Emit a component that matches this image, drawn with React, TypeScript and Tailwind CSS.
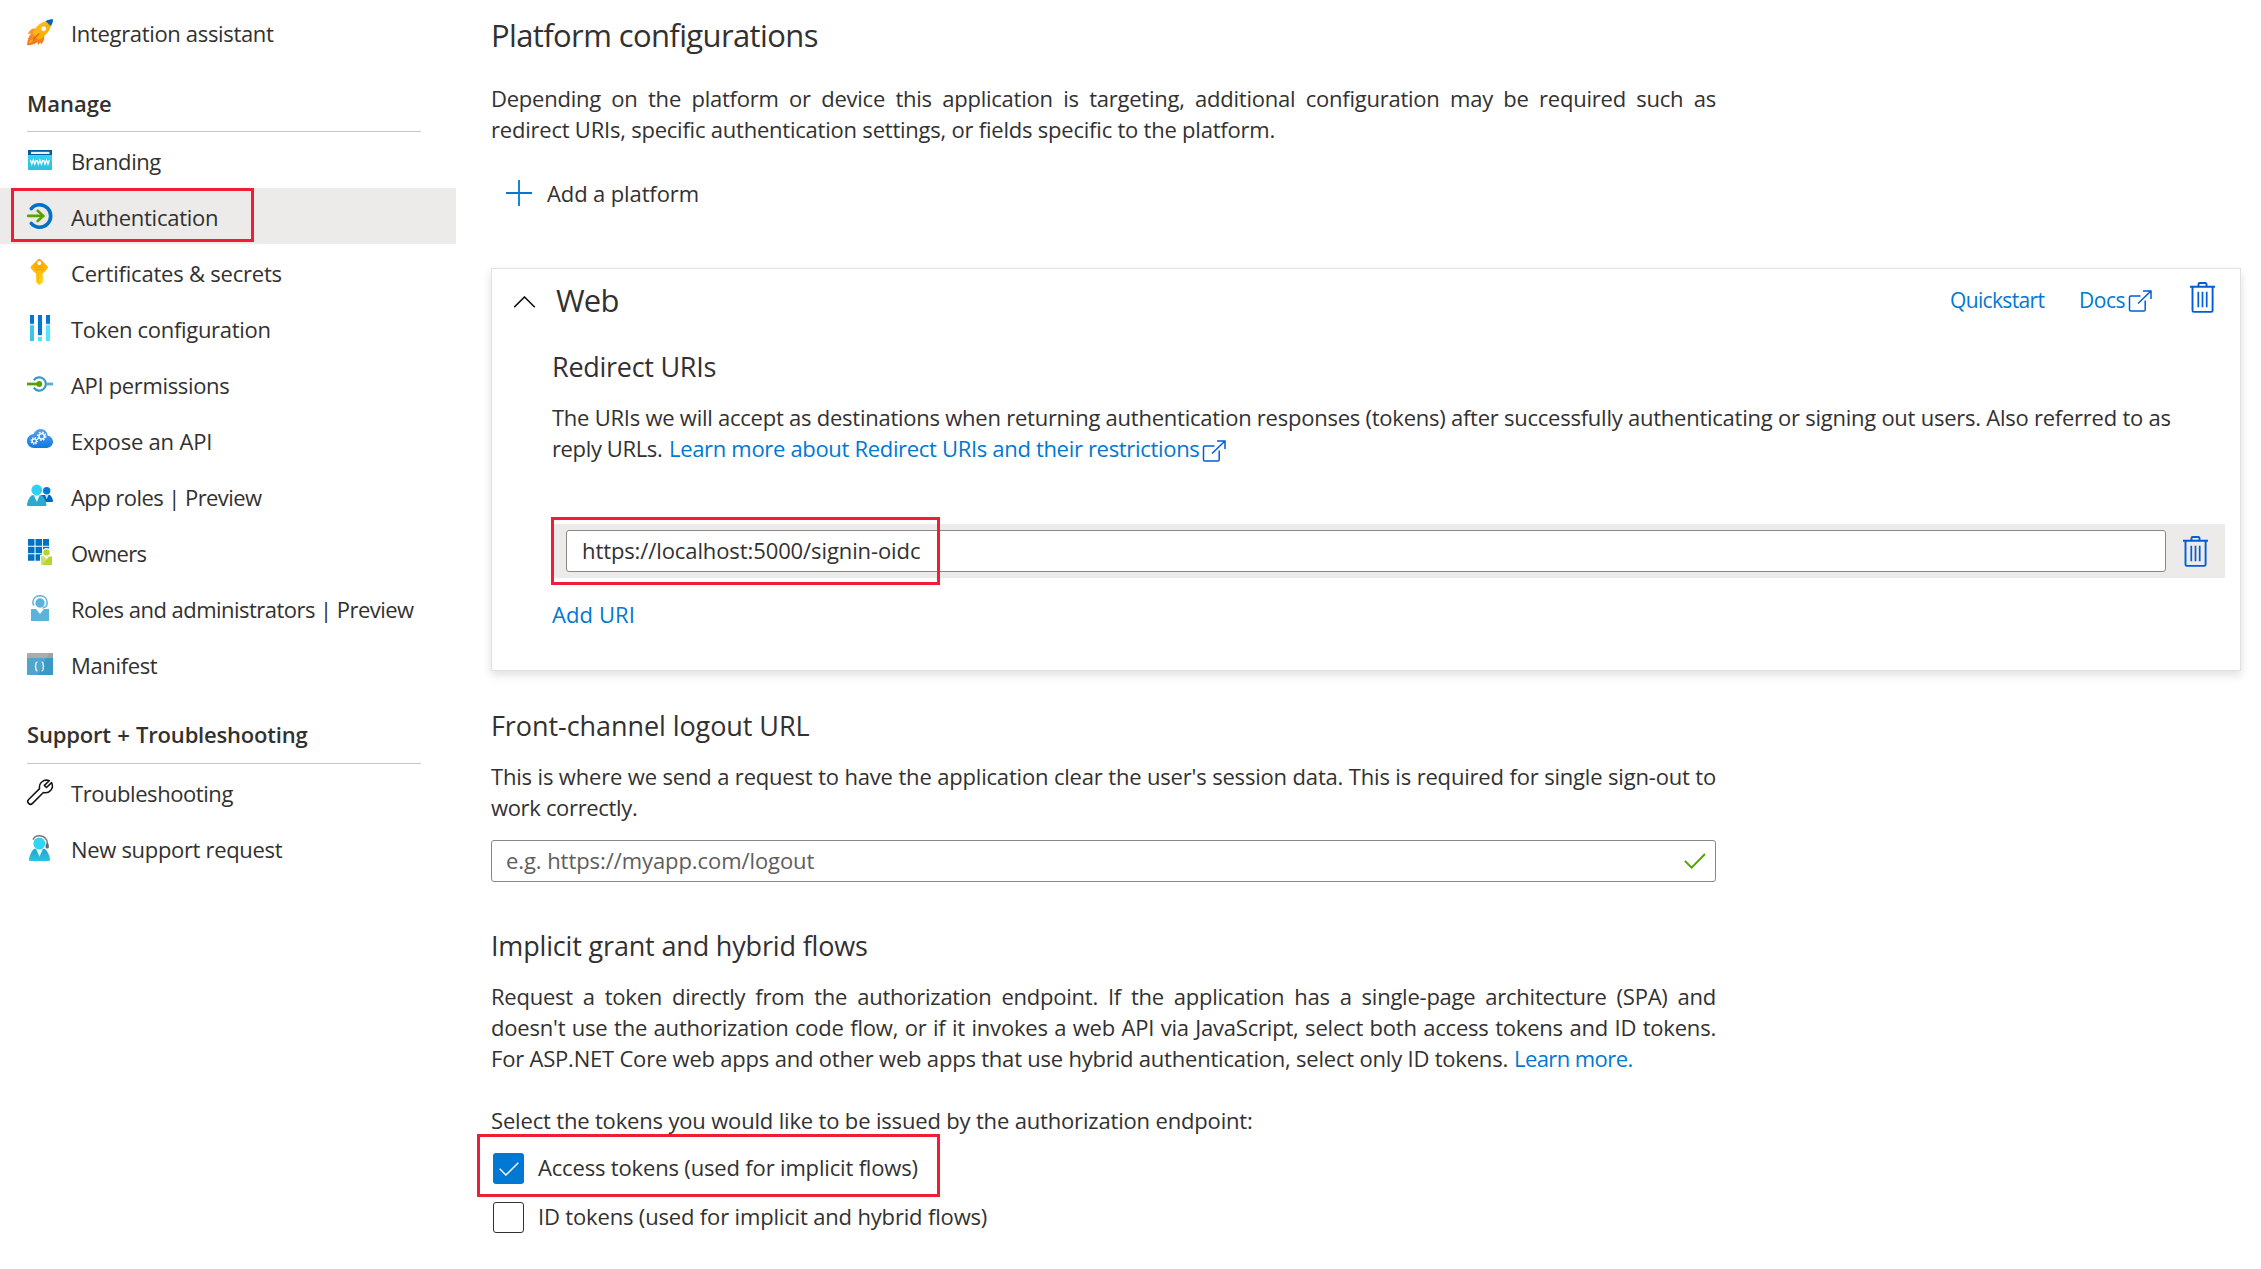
import type { ReactNode } from "react";

function Icon({ children }: { children: ReactNode }) {
  return (
    <svg viewBox="0 0 26 26" className="h-[26px] w-[26px] shrink-0 overflow-visible">
      {children}
    </svg>
  );
}

const RocketIcon = () => (
  <Icon>
    <defs>
      <linearGradient id="rocketFin" x1="0" y1="0" x2="0" y2="1">
        <stop offset="0" stopColor="#ff9a2e" />
        <stop offset="1" stopColor="#f27514" />
      </linearGradient>
    </defs>
    <path d="M8.5 9.5C5 9 2.3 10.8 1 15l3.2-.6C1.6 17 .2 21 .1 26.3c4.6-.2 7.9-1 10.4-3.2l.7 2.9 2-2.4 1.2 1.6c2.6-3.2 3.4-5.7 2.6-9.2z" fill="url(#rocketFin)" />
    <path d="M18.5 2.2C12.4 4 8.2 8 5.6 14.6l5.9 5.9C18.3 17 22 12.4 23.8 6.9z" fill="#fdb913" />
    <path d="M21.2 4.6 8.5 17.5l3 3C18.3 17 22 12.4 23.8 6.9z" fill="#f5b400" />
    <path d="M26 .2c-3 0-5.300.6-7.500 2L23.800 7C25.300 5 26 3 26 .2z" fill="#0a62b8" />
    <circle cx="16.700" cy="9.700" r="2.700" fill="#fff" stroke="#f7a11b" strokeWidth=".6" />
    <path d="M5.500 21.500 12 14.600" stroke="#e0641b" strokeWidth="1.500" />
    <path d="m2.300 23.700 3.400-3.200" stroke="#ffb52e" strokeWidth="1.600" />
  </Icon>
);

const BrandingIcon = () => (
  <Icon>
    <defs>
      <linearGradient id="brandBody" x1="0" y1="0" x2="0" y2="1">
        <stop offset="0" stopColor="#32d4f5" />
        <stop offset="1" stopColor="#2fc0dc" />
      </linearGradient>
    </defs>
    <path d="M1 3h24v5H1z" fill="#005ba1" />
    <path d="M1 8h24v14.200a.8.8 0 0 1-.8.8H1.800a.8.8 0 0 1-.8-.8z" fill="url(#brandBody)" />
    <path d="M4 4.800h18.500v2.200H4z" fill="#e8f1f8" />
    <path d="m3.400 13 1.400 4 1.500-4 1.500 4 1.400-4M10 13l1.400 4 1.500-4 1.500 4 1.400-4M16.600 13l1.400 4 1.500-4 1.500 4 1.400-4" fill="none" stroke="#fff" strokeWidth="1.300" />
  </Icon>
);

const AuthIcon = () => (
  <Icon>
    <path d="M4.300 5.600C6.500 3 9.300 1.800 12.500 1.800a11.200 11.200 0 0 1 0 22.400c-3.200 0-6-1.200-8.200-3.800" fill="none" stroke="#0072c6" strokeWidth="3.600" strokeLinecap="round" />
    <path d="M1.200 12.900h14" stroke="#57a300" strokeWidth="2.700" strokeLinecap="round" />
    <path d="m10.700 7.800 5.500 5.100-5.500 5.100" fill="none" stroke="#57a300" strokeWidth="2.700" strokeLinecap="round" />
  </Icon>
);

const KeyIcon = () => (
  <Icon>
    <defs>
      <linearGradient id="keyFill" x1="0" y1="0" x2="0" y2="1">
        <stop offset="0" stopColor="#fea500" />
        <stop offset="1" stopColor="#ffd91a" />
      </linearGradient>
    </defs>
    <path d="M10.800.6a2.100 2.100 0 0 1 3 0l6.500 6.400a2.100 2.100 0 0 1 0 2.900l-4.800 5v1.500l1 1-1 1.300 1 1.300-1 1.300 1 1.400-4.200 3.600-3.200-3V14.900l-4.800-5a2.100 2.100 0 0 1 0-2.900z" fill="url(#keyFill)" />
    <circle cx="12.300" cy="4.100" r="2" fill="#fff" />
    <path d="M8 8.400h8.600M8 10.600h8.600" stroke="#f59b00" strokeWidth=".9" />
    <path d="M11.200 14.500v9.300" stroke="#f5a800" strokeWidth=".9" />
  </Icon>
);

const TokenIcon = () => (
  <Icon>
    <path d="M3 0h4v9H3zM11 0h4v20h-4zM19 0h4v9h-4z" fill="#0078d4" />
    <path d="M3 10.300h4V26H3z" fill="#3cc5e4" />
    <path d="M19 10.300h4V26h-4zM11 22h4v4h-4z" fill="#50e6ff" />
    <path d="M2.500 9.200h5M18.500 9.200h5M10.500 20.800h5" stroke="#d2d0ce" strokeWidth="1" />
  </Icon>
);

const ApiIcon = () => (
  <Icon>
    <path d="M6.800 9.300a6.600 6.600 0 1 1 0 7.400" fill="none" stroke="#3999c6" strokeWidth="2.200" />
    <path d="M19 13h7" stroke="#5aa9d0" strokeWidth="2.800" />
    <path d="M0 13h12" stroke="#57a300" strokeWidth="2.800" />
    <circle cx="12.300" cy="13" r="2.900" fill="#57a300" />
  </Icon>
);

const CloudIcon = () => (
  <Icon>
    <defs>
      <linearGradient id="cloudFill" x1="0" y1="0" x2="0" y2="1">
        <stop offset="0" stopColor="#5ea0ef" />
        <stop offset="1" stopColor="#0f7ade" />
      </linearGradient>
    </defs>
    <path d="M26 14.800c0-3.200-2.300-5.700-5.300-6C20.400 4.800 17.500 2 13.600 2 10.400 2 7.600 4 6.600 7.100 2.800 7.500 0 10.400 0 14c0 4 3.100 7 7 7h12.800c3.600-.2 6.200-2.900 6.200-6.200z" fill="url(#cloudFill)" />
    <g fill="none" stroke="#fff">
      <circle cx="14.700" cy="9.300" r="2.700" strokeWidth="1.400" />
      <circle cx="14.700" cy="9.300" r="4" strokeWidth="1.500" strokeDasharray="1.570 1.570" />
      <circle cx="7.300" cy="13.900" r="2.100" strokeWidth="1.200" />
      <circle cx="7.300" cy="13.900" r="3.200" strokeWidth="1.300" strokeDasharray="1.260 1.250" />
    </g>
  </Icon>
);

const PeopleIcon = () => (
  <Icon>
    <circle cx="19.700" cy="7.700" r="3.700" fill="#0078d4" />
    <path d="M14 12h9c1.600 1.200 2.800 4 3 6.200 0 .5-.3.800-.8.800H17z" fill="#0069be" />
    <path d="m18 12 1.700 4.200 1.700-4.200z" fill="#cfe6f8" />
    <path d="M19.500 21.800c0 .9-.6 1.300-1.300 1.300H1.300C.5 23.100 0 22.700 0 21.800c.4-4.200 2.800-8.300 5-9.500h9.500c2.200 1.200 4.600 5.300 5 9.500z" fill="#2ba9ce" />
    <path d="m6.800 12.200 3 6.700 3-6.700z" fill="#e4f6fb" />
    <circle cx="9.800" cy="7" r="5.400" fill="#32d0f0" />
  </Icon>
);

const OwnersIcon = () => (
  <Icon>
    <path d="M1 0h6.500v6.700H1zM8.500 0H15v6.700H8.500zM16 0h6v6.700h-6zM1 7.700h6.500v6.500H1zM8.500 7.700H15v6.500H8.500zM16 7.700h6v6.500h-6zM1 15.200h6.500v6.500H1zM8.500 15.200H15v6.500H8.500z" fill="#0072c6" />
    <circle cx="19.500" cy="13.300" r="4.200" fill="#fff" />
    <path d="M13 16h12.500v10.500H13z" fill="#fff" />
    <circle cx="19.500" cy="13.400" r="3.200" fill="#b8d432" />
    <path d="M14 17.500h3l2.500 3.300 2.500-3.300h3V26H14z" fill="#b8d432" />
    <path d="M14 17.500h3l2.500 3.300L15.500 26H14z" fill="#cde06a" />
  </Icon>
);

const AdminIcon = () => (
  <Icon>
    <circle cx="13" cy="8" r="4.700" fill="#59b4d9" />
    <path d="M7 10.500A7 7 0 0 1 5.800 7.600C5.900 3.400 9 .7 13 .7s7.100 2.700 7.200 6.900c0 3-1.700 5-4.700 5.400" fill="none" stroke="#59b4d9" strokeWidth="1.500" />
    <path d="M4 14h5l4 5 4-5h5v12H4z" fill="#59b4d9" />
  </Icon>
);

const ManifestIcon = () => (
  <Icon>
    <path d="M0 2h26v5H0z" fill="#a0a1a2" />
    <path d="M0 7h26v16.500a.5.5 0 0 1-.5.5H.5a.5.5 0 0 1-.5-.5z" fill="#3999c6" />
    <path d="M0 2h22L11 24H0z" fill="#fff" opacity=".12" />
    <path d="M10.500 11c-1.500 0-1.600.7-1.600 1.700v1.100c0 .9-.3 1.400-1.100 1.400.8 0 1.100.5 1.100 1.400v1.700c0 1 .2 1.700 1.600 1.700M14.500 11c1.500 0 1.600.7 1.600 1.700v1.100c0 .9.300 1.400 1.100 1.400-.8 0-1.100.5-1.100 1.400v1.700c0 1-.2 1.700-1.600 1.700" fill="none" stroke="#fff" strokeWidth="1.200" />
  </Icon>
);

const WrenchIcon = () => (
  <Icon>
    <path d="M22.300 1.800A7 7 0 0 0 12.600 9.600L1.600 20.500a2.700 2.700 0 0 0 3.900 3.900L16.400 13.500a7 7 0 0 0 8.200-9.900L19.500 8.500l-2.200-2.100z" fill="#fff" stroke="#111" strokeWidth="1.500" strokeLinejoin="round" />
  </Icon>
);

const SupportIcon = () => (
  <Icon>
    <defs>
      <linearGradient id="supportBody" x1="0" y1="0" x2="0" y2="1">
        <stop offset="0" stopColor="#22a5cb" />
        <stop offset="1" stopColor="#28c3e4" />
      </linearGradient>
    </defs>
    <path d="M6 4.600C7.300 1.800 9.500.7 12.300.7c4.700 0 8 3.300 8 7.500v3.600" fill="none" stroke="#7a7a7a" strokeWidth="1.500" />
    <rect x="18.600" y="8.600" width="3.200" height="5" rx="1.400" fill="#6b6b6b" />
    <path d="M23 24.800c0 .7-.5 1.200-1.200 1.200H3.200C2.500 26 2 25.500 2 24.800c.4-4.800 2.800-9.200 5.500-11h10c2.700 1.800 5.100 6.200 5.500 11z" fill="url(#supportBody)" />
    <path d="m9 13.800 3.500 7.900 3.500-7.900z" fill="#e6f8fc" />
    <circle cx="12.300" cy="8.500" r="5.900" fill="#32d4f5" />
  </Icon>
);

const ExternalIcon = () => (
  <svg viewBox="0 0 24 22" className="h-[22px] w-[24px] shrink-0" fill="none" stroke="#015cda" strokeWidth="1.500">
    <path d="M12.500 6H2.800A1.300 1.300 0 0 0 1.500 7.300v12.400A1.300 1.300 0 0 0 2.800 21h13.100a1.300 1.300 0 0 0 1.300-1.300V10.500" />
    <path d="M15 1h8v8M23 1 10 13.500" />
  </svg>
);

const TrashIcon = () => (
  <svg viewBox="0 0 26 31" className="h-[31px] w-[26px] shrink-0" fill="none" stroke="#015cda" strokeWidth="1.900">
    <path d="M0 4.700h25M8.500 4.500V2.200A1.200 1.200 0 0 1 9.700 1h5.600a1.200 1.200 0 0 1 1.200 1.200v2.300" />
    <path d="M2.500 5v23.500a1.400 1.400 0 0 0 1.400 1.400h17.300a1.400 1.400 0 0 0 1.400-1.400V5" />
    <path d="M8.300 9.700v15.600M12.500 9.700v15.600M16.700 9.700v15.600" strokeWidth="1.700" />
  </svg>
);

/** Red annotation frame laid over a highlighted control. */
const Frame = ({ className }: { className: string }) => (
  <span className={`pointer-events-none absolute border-[3px] border-[#f11d37] ${className}`} />
);

type NavProps = { icon: ReactNode; label: string; track: string; active?: boolean };

function NavItem({ icon, label, track, active }: NavProps) {
  return (
    <li className={`relative flex h-14 items-center pl-[27px] ${active ? "bg-[#ecebe9]" : ""}`}>
      {icon}
      <span className={`ml-[18px] pt-[3px] whitespace-nowrap ${track}`}>{label}</span>
      {active && <Frame className="top-0 left-[11px] h-[54px] w-[243px]" />}
    </li>
  );
}

const manageItems: NavProps[] = [
  { icon: <BrandingIcon />, label: "Branding", track: "tracking-[-0.45px]" },
  { icon: <AuthIcon />, label: "Authentication", track: "tracking-[-0.26px]", active: true },
  { icon: <KeyIcon />, label: "Certificates & secrets", track: "tracking-[-0.21px]" },
  { icon: <TokenIcon />, label: "Token configuration", track: "tracking-[-0.31px]" },
  { icon: <ApiIcon />, label: "API permissions", track: "tracking-[-0.34px]" },
  { icon: <CloudIcon />, label: "Expose an API", track: "tracking-[-0.2px]" },
  { icon: <PeopleIcon />, label: "App roles | Preview", track: "tracking-[-0.56px]" },
  { icon: <OwnersIcon />, label: "Owners", track: "tracking-[-0.7px]" },
  { icon: <AdminIcon />, label: "Roles and administrators | Preview", track: "tracking-[-0.53px]" },
  { icon: <ManifestIcon />, label: "Manifest", track: "tracking-[-0.35px]" },
];

function Sidebar() {
  return (
    <nav className="w-[456px] shrink-0 pt-1">
      <ul>
        <NavItem icon={<RocketIcon />} label="Integration assistant" track="tracking-[-0.33px]" />
      </ul>
      <h2 className="mr-[35px] ml-[27px] h-[72px] border-b border-[#c8c6c4] pt-[28px] font-semibold tracking-[0px]">Manage</h2>
      <ul>
        {manageItems.map((item) => (
          <NavItem key={item.label} {...item} />
        ))}
      </ul>
      <h2 className="mr-[35px] ml-[27px] h-[72px] border-b border-[#c8c6c4] pt-[27px] font-semibold tracking-[-0.2px] [word-spacing:1px]">
        Support + Troubleshooting
      </h2>
      <ul>
        <NavItem icon={<WrenchIcon />} label="Troubleshooting" track="tracking-[-0.44px]" />
        <NavItem icon={<SupportIcon />} label="New support request" track="tracking-[-0.32px]" />
      </ul>
    </nav>
  );
}

function WebCard() {
  return (
    <section className="mt-[59px] h-[403px] w-[1750px] border border-[#e1e1e1] shadow-[0_4px_9px_rgba(0,0,0,0.13)]">
      <header className="flex h-[52px] pt-[10px] pr-6 pl-[22px]">
        <svg viewBox="0 0 22 12" className="mt-[17px] h-3 w-[22px]" fill="none" stroke="#111" strokeWidth="1.600">
          <path d="M.2 11.300 10.500 1l10.300 10.300" />
        </svg>
        <h2 className="ml-5 text-[31px] leading-[42px] tracking-[-0.76px]">Web</h2>
        <div className="ml-auto flex text-[21px] text-[#0078d4]">
          <a className="w-[129px] pt-[6px] tracking-[-0.65px]">Quickstart</a>
          <a className="flex tracking-[-0.47px]">
            <span className="w-[49px] pt-[6px]">Docs</span>
            <span className="pt-[11px]">
              <ExternalIcon />
            </span>
          </a>
          <button className="mt-[3px] ml-[38px] h-[31px]">
            <TrashIcon />
          </button>
        </div>
      </header>
      <div className="pl-[60px]">
        <h3 className="mt-[27px] text-[27px] leading-[37px] tracking-[-0.28px]">Redirect URIs</h3>
        <p className="mt-[17px] whitespace-nowrap">
          <span className="block tracking-[-0.243px]">
            The URIs we will accept as destinations when returning authentication responses (tokens) after successfully authenticating or signing out users. Also referred to as
          </span>
          <span className="flex">
            <span className="w-[117px] tracking-[-0.37px]">reply URLs.</span>
            <a className="flex text-[#0078d4]">
              <span className="w-[533px] tracking-[-0.32px]">Learn more about Redirect URIs and their restrictions</span>
              <span className="pt-[7px]">
                <ExternalIcon />
              </span>
            </a>
          </span>
        </p>
        <div className="relative mt-[60px] flex h-[54px] w-[1673px] bg-[#ecebe9] pt-[6px] pl-[14px]">
          <div className="h-[42px] w-[1600px] rounded-[3px] border border-[#8a8886] bg-white pt-1 pl-[15px] tracking-[-0.1px]">
            https://localhost:5000/signin-oidc
          </div>
          <button className="mt-[6px] ml-[17px] h-[31px]">
            <TrashIcon />
          </button>
          <Frame className="-top-[7px] -left-px h-[68px] w-[389px]" />
        </div>
        <a className="mt-[21px] block tracking-[0.1px] text-[#0078d4]">Add URI</a>
      </div>
    </section>
  );
}

export default function App() {
  return (
    <div className="flex h-[1269px] w-[2261px] overflow-hidden bg-white font-['Open_Sans','Noto_Sans',sans-serif] text-[22px] leading-[31px] text-[#323130]">
      <Sidebar />
      <main className="ml-[35px] pt-[14px] whitespace-nowrap">
        <h1 className="text-[31px] leading-[42px] tracking-[-0.62px]">Platform configurations</h1>
        <p className="mt-[27px] w-[1225px]">
          <span className="block [text-align-last:justify] tracking-[-0.24px]">
            Depending on the platform or device this application is targeting, additional configuration may be required such as
          </span>
          <span className="block tracking-[-0.22px]">
            redirect URIs, specific authentication settings, or fields specific to the platform.
          </span>
        </p>
        <button className="mt-[33px] flex h-[31px] pl-[15px] tracking-[-0.12px]">
          <svg viewBox="0 0 26 26" className="mt-[2px] mr-[15px] h-[26px] w-[26px]" stroke="#0078d4" strokeWidth="1.800">
            <path d="M0 13h26M13 0v26" />
          </svg>
          Add a platform
        </button>

        <WebCard />

        <h2 className="mt-9 text-[27px] leading-[37px] tracking-[-0.073px]">Front-channel logout URL</h2>
        <p className="mt-[17px] w-[1225px]">
          <span className="block [text-align-last:justify] tracking-[-0.19px]">
            This is where we send a request to have the application clear the user's session data. This is required for single sign-out to
          </span>
          <span className="block tracking-[-0.33px]">work correctly.</span>
        </p>
        <div className="mt-[17px] flex h-[42px] w-[1225px] justify-between rounded-[3px] border border-[#8a8886] pt-1 pr-[9px] pl-[14px]">
          <span className="tracking-[-0.074px] text-[#605e5c]">e.g. https://myapp.com/logout</span>
          <svg viewBox="0 0 22 16" className="mt-2 h-4 w-[22px]" fill="none" stroke="#57a300" strokeWidth="2">
            <path d="M.9 7.900 7.600 14.600 21 1" />
          </svg>
        </div>

        <h2 className="mt-[45px] text-[27px] leading-[37px] tracking-[-0.17px]">Implicit grant and hybrid flows</h2>
        <p className="mt-[17px] w-[1225px]">
          <span className="block [text-align-last:justify] tracking-[-0.24px]">
            Request a token directly from the authorization endpoint. If the application has a single-page architecture (SPA) and
          </span>
          <span className="block [text-align-last:justify] tracking-[-0.2px]">
            doesn't use the authorization code flow, or if it invokes a web API via JavaScript, select both access tokens and ID tokens.
          </span>
          <span className="flex">
            <span className="w-[1023px] tracking-[-0.205px]">
              For ASP.NET Core web apps and other web apps that use hybrid authentication, select only ID tokens.
            </span>
            <a className="tracking-[-0.58px] text-[#0078d4]">Learn more.</a>
          </span>
        </p>
        <p className="mt-[31px] tracking-[-0.17px]">
          Select the tokens you would like to be issued by the authorization endpoint:
        </p>
        <label className="relative mt-4 flex h-[31px] pl-[2px]">
          <span className="mt-px mr-[14px] flex h-[31px] w-[31px] items-center justify-center rounded-[3px] bg-[#0078d4]">
            <svg viewBox="0 0 20 14" className="h-[14px] w-5" fill="none" stroke="#fff" strokeWidth="1.500">
              <path d="m.7 6.800 6.200 6.200L19.300.8" />
            </svg>
          </span>
          <span className="tracking-[-0.168px]">Access tokens (used for implicit flows)</span>
          <Frame className="-top-[18px] -left-[14px] h-[63px] w-[463px]" />
        </label>
        <label className="mt-[18px] flex h-[31px] pl-[2px]">
          <span className="mt-px mr-[14px] h-[31px] w-[31px] rounded-[3px] border border-[#323130]" />
          <span className="tracking-[-0.165px]">ID tokens (used for implicit and hybrid flows)</span>
        </label>
      </main>
    </div>
  );
}
